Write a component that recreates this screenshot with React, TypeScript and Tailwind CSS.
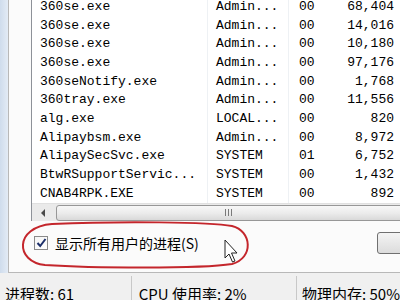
import React from "react";

const rows: [string, string, string, string][] = [
  ["360se.exe", "Admin...", "00", "68,404"],
  ["360se.exe", "Admin...", "00", "14,016"],
  ["360se.exe", "Admin...", "00", "10,180"],
  ["360se.exe", "Admin...", "00", "97,176"],
  ["360seNotify.exe", "Admin...", "00", "1,768"],
  ["360tray.exe", "Admin...", "00", "11,556"],
  ["alg.exe", "LOCAL...", "00", "820"],
  ["Alipaybsm.exe", "Admin...", "00", "8,972"],
  ["AlipaySecSvc.exe", "SYSTEM", "01", "6,752"],
  ["BtwRSupportServic...", "SYSTEM", "00", "1,432"],
  ["CNAB4RPK.EXE", "SYSTEM", "00", "892"],
];

export default function App() {
  const mono = { fontFamily: '"Liberation Mono", "DejaVu Sans Mono", monospace' };
  const cjk = { fontFamily: '"Noto Sans CJK SC", "Noto Sans", sans-serif' };
  return (
    <div className="relative w-[400px] h-[300px] overflow-hidden bg-[#f0f0f0] flex flex-col">
      <div className="flex h-[273px] shrink-0">
        <div className="w-[8px] bg-gradient-to-r from-[#cfdcec] to-[#e3ebf5]" />
        <div className="flex-1 flex flex-col border-l border-b border-[#b8b8b8] bg-[#fbfbfb] pl-[22px]">
          <div className="h-[221px] flex flex-col border-l border-[#8e9299] bg-white">
            <div className="relative flex-1 overflow-hidden" style={mono}>
              <div className="absolute left-[175px] top-0 bottom-0 w-px bg-[#eef1f4]" />
              <div className="absolute left-[256px] top-0 bottom-0 w-px bg-[#eef1f4]" />
              <div className="-mt-[3px] flex flex-col text-[13px] text-black">
                {rows.map((r, i) => (
                  <div key={i} className="h-[18.7px] flex items-center leading-none">
                    <div className="w-[184px] pl-[8px] whitespace-nowrap">{r[0]}</div>
                    <div className="w-[83px] whitespace-nowrap">{r[1]}</div>
                    <div className="w-[40px]">{r[2]}</div>
                    <div className="w-[55px] text-right">{r[3]}</div>
                  </div>
                ))}
              </div>
            </div>
            <div className="h-[18px] flex items-center bg-[#eaeaea] border-t border-[#e0e0e0]">
              <div className="w-[22px] flex items-center justify-center">
                <svg width="6" height="8" viewBox="0 0 6 8">
                  <path d="M5 0 L1 4 L5 8 Z" fill="#4a4a4a" />
                </svg>
              </div>
              <div className="flex-1 h-[16px] ml-[2px] -mr-[40px] rounded-[3px] border border-[#979797] bg-gradient-to-b from-[#f7f7f7] via-[#ececec] to-[#d9d9d9] flex items-center justify-center">
                <div className="flex gap-[2px] -ml-[40px]">
                  <div className="w-px h-[7px] bg-[#7a7a7a]" />
                  <div className="w-px h-[7px] bg-[#7a7a7a]" />
                  <div className="w-px h-[7px] bg-[#7a7a7a]" />
                </div>
              </div>
            </div>
          </div>
          <div className="flex-1 flex items-start relative">
            <div className="flex items-center mt-[15px] ml-[3px] gap-[7px]">
              <div className="w-[14px] h-[14px] border border-[#8a8a8a] bg-gradient-to-br from-[#f4f4f4] to-[#ffffff] flex items-center justify-center">
                <svg width="11" height="10" viewBox="0 0 11 10">
                  <path d="M1.5 5 L4.2 8 L9.5 1" stroke="#1c2f6a" strokeWidth="2" fill="none" />
                </svg>
              </div>
              <span className="text-[14px] text-black leading-none" style={cjk}>
                显示所有用户的进程(S)
              </span>
            </div>
            <div className="absolute left-[346px] top-[11px] w-[60px] h-[22px] rounded-[3px] border border-[#707070] bg-gradient-to-b from-[#f4f4f4] to-[#dcdcdc]" />
          </div>
        </div>
      </div>
      <div className="h-[3px] shrink-0" />
      <div className="flex-1 flex text-[15px] text-black leading-none" style={cjk}>
        <div className="w-[133px] border-r border-[#c8c8c8] pl-[5px] pt-[10px] whitespace-nowrap">进程数: 61</div>
        <div className="w-[167px] border-r border-[#c8c8c8] pl-[7px] pt-[10px] whitespace-nowrap">CPU 使用率: 2%</div>
        <div className="flex-1 pl-[5px] pt-[10px] whitespace-nowrap">物理内存: 50%</div>
      </div>
      <svg className="absolute left-0 top-0 pointer-events-none" width="400" height="300">
        <path
          d="M52 224 C 120 221, 210 222, 232 226 C 252 231, 254 258, 232 264 C 200 269, 90 268, 45 265 C 15 262, 14 227, 52 224 Z"
          fill="none"
          stroke="#c4262c"
          strokeWidth="2"
        />
        <path
          d="M225 240 L225 258 L229 254 L232.5 262 L235 261 L231.5 253 L237 253 Z"
          fill="#ffffff"
          stroke="#222"
          strokeWidth="1"
          strokeLinejoin="round"
        />
      </svg>
    </div>
  );
}
